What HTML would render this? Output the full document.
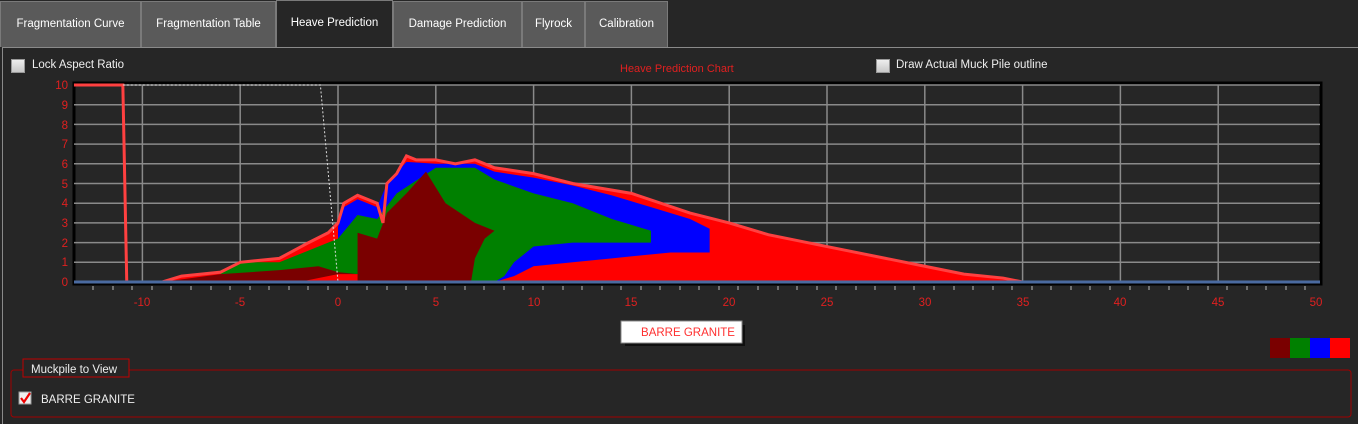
<!DOCTYPE html>
<html><head><style>
body{margin:0;width:1358px;height:424px;background:#262626;font-family:"Liberation Sans",sans-serif;overflow:hidden;position:relative}
.tabs{position:absolute;top:0;left:0;width:1358px;height:47px;background:#262626}
.tab{position:absolute;top:1px;height:46px;background:#5a5a5a;border:1px solid #7a7a7a;border-bottom:none;box-sizing:border-box;color:#fff;font-size:11.5px;line-height:44px;text-align:center}
.tab.a{background:#262626;top:0;height:48px}
.panel{position:absolute;top:47px;left:2px;width:1356px;height:377px;border-left:1px solid #8a8a8a;border-top:1px solid #8a8a8a;box-sizing:border-box}
.cb{position:absolute;width:12px;height:12px;background:linear-gradient(#eee,#c8c8c8);border:1px solid #999}
.lbl{position:absolute;color:#eee;font-size:11.5px}
</style></head><body>
<div class="tabs">
<div class="tab" style="left:0;width:141px">Fragmentation Curve</div>
<div class="tab" style="left:141px;width:135px">Fragmentation Table</div>
<div class="tab a" style="left:276px;width:117px;line-height:44px">Heave Prediction</div>
<div class="tab" style="left:393px;width:129px">Damage Prediction</div>
<div class="tab" style="left:522px;width:63px">Flyrock</div>
<div class="tab" style="left:585px;width:83px">Calibration</div>
</div>
<div class="panel"></div>
<div class="cb" style="left:11px;top:59px"></div><div class="lbl" style="left:32px;top:59px">Lock Aspect Ratio</div>
<div class="cb" style="left:876px;top:59px"></div><div class="lbl" style="left:896px;top:59px">Draw Actual Muck Pile outline</div>
<div class="lbl" style="left:620px;top:63px;color:#e02020;font-size:11px">Heave Prediction Chart</div>
<svg width="1358" height="424" style="position:absolute;left:0;top:0">
<rect x="74" y="83" width="1247" height="201" fill="#262626" stroke="#000" stroke-width="3"/>
<g stroke="#8a8a8a" stroke-width="1.5">
<line x1="74" x2="1320" y1="104.7" y2="104.7"/><line x1="74" x2="1320" y1="124.4" y2="124.4"/><line x1="74" x2="1320" y1="144.1" y2="144.1"/><line x1="74" x2="1320" y1="163.8" y2="163.8"/><line x1="74" x2="1320" y1="183.5" y2="183.5"/><line x1="74" x2="1320" y1="203.2" y2="203.2"/><line x1="74" x2="1320" y1="222.9" y2="222.9"/><line x1="74" x2="1320" y1="242.6" y2="242.6"/><line x1="74" x2="1320" y1="262.3" y2="262.3"/><line x1="74" x2="1320" y1="85" y2="85"/>
<line y1="85" y2="282" x1="142.4" x2="142.4"/><line y1="85" y2="282" x1="240.2" x2="240.2"/><line y1="85" y2="282" x1="338" x2="338"/><line y1="85" y2="282" x1="435.8" x2="435.8"/><line y1="85" y2="282" x1="533.6" x2="533.6"/><line y1="85" y2="282" x1="631.4" x2="631.4"/><line y1="85" y2="282" x1="729.2" x2="729.2"/><line y1="85" y2="282" x1="827" x2="827"/><line y1="85" y2="282" x1="924.8" x2="924.8"/><line y1="85" y2="282" x1="1022.6" x2="1022.6"/><line y1="85" y2="282" x1="1120.4" x2="1120.4"/><line y1="85" y2="282" x1="1218.2" x2="1218.2"/>
</g>
<g transform="translate(338,282) scale(19.56,-19.7)">
<polygon fill="#ff0000" points="-9,0 -8,0.3 -6,0.5 -5,1 -3,1.2 -1.5,2 -0.5,2.5 0,3 0.3,4 1,4.4 2,4 2.3,3 2.5,5 3,5.5 3.5,6.4 4,6.2 5,6.2 6,6 7,6.2 8,5.8 10,5.5 12,5 15,4.5 18,3.5 20,3 22,2.4 25,1.8 28,1.2 30,0.8 32,0.4 34,0.2 35,0"/>
<polygon fill="#0000ff" points="0,2.8 0.3,3.8 1,4.2 2,3.8 2.5,5 3.5,6.1 5,6 7,6 8,5.6 10,5.3 12,4.9 14,4.4 16,3.8 18,3.2 19,2.7 19,1.5 17,1.5 14,1.2 12,1 10,0.8 9,0.3 8,0 0,0"/>
<polygon fill="#008000" points="-6,0 -6,0.6 -5,1 -3,1 -1.5,1.6 0,2.2 1,3.4 2,3.2 3,4.5 5,5.8 7,5.8 8,5.2 10,4.5 12,4 14,3.2 16,2.6 16,2 12,2 10,1.8 9,1 8.5,0.3 8,0"/>
<polygon fill="#7a0000" points="-9,0 -6,0.4 -3,0.6 -1,0.8 0,0.5 1,0.4 1,2.5 2,2.2 2.5,3.5 3.5,4.5 4.5,5.6 5.5,4 7,3 8,2.6 7.5,2.2 7,1.2 6.8,0"/>
<polygon fill="#ff0000" points="-2,0 1,0 1,0.4 0,0.4"/>
<polygon fill="#ff0000" points="9.2,0 10,0.8 14,1 19,1.4 19.2,2.6 22,2.4 22,0"/>
<polyline fill="none" stroke="#ff4040" stroke-width="3" vector-effect="non-scaling-stroke" points="-13.5,10 -11,10 -10.8,0 -9,0 -8,0.3 -6,0.5 -5,1 -3,1.2 -1.5,2 -0.5,2.5 0,3 0.3,4 1,4.4 2,4 2.3,3 2.5,5 3,5.5 3.5,6.4 4,6.2 5,6.2 6,6 7,6.2 8,5.8 10,5.5 12,5 15,4.5 18,3.5 20,3 22,2.4 25,1.8 28,1.2 30,0.8 32,0.4 34,0.2 35,0 50,0"/>
<polyline fill="none" stroke="#ddd" stroke-width="1" stroke-dasharray="2,2" vector-effect="non-scaling-stroke" points="-11,10 -0.9,10 0,0"/>
</g>
<line x1="74" x2="1320" y1="282" y2="282" stroke="#4a6aa0" stroke-width="3"/>
<path stroke="#888" stroke-width="1.5" d="M93 286v4M113 286v4M132 286v4M152 286v4M171 286v4M191 286v4M211 286v4M230 286v4M250 286v4M269 286v4M289 286v4M308 286v4M328 286v4M347 286v4M367 286v4M387 286v4M406 286v4M426 286v4M445 286v4M465 286v4M484 286v4M504 286v4M523 286v4M543 286v4M563 286v4M582 286v4M602 286v4M621 286v4M641 286v4M660 286v4M680 286v4M699 286v4M719 286v4M738 286v4M758 286v4M778 286v4M797 286v4M817 286v4M836 286v4M856 286v4M875 286v4M895 286v4M914 286v4M934 286v4M954 286v4M973 286v4M993 286v4M1012 286v4M1032 286v4M1051 286v4M1071 286v4M1090 286v4M1110 286v4M1130 286v4M1149 286v4M1169 286v4M1188 286v4M1208 286v4M1227 286v4M1247 286v4M1266 286v4M1286 286v4M1305 286v4"/>
<g fill="#e02020" font-size="11.5" font-family="Liberation Sans" text-anchor="end">
<text x="68" y="89">10</text><text x="68" y="109">9</text><text x="68" y="129">8</text><text x="68" y="148">7</text><text x="68" y="168">6</text><text x="68" y="188">5</text><text x="68" y="207">4</text><text x="68" y="227">3</text><text x="68" y="247">2</text><text x="68" y="266">1</text><text x="68" y="286">0</text>
</g>
<g fill="#e02020" font-size="11.5" font-family="Liberation Sans" text-anchor="middle">
<text x="142" y="306">-10</text><text x="240" y="306">-5</text><text x="338" y="306">0</text><text x="436" y="306">5</text><text x="534" y="306">10</text><text x="631" y="306">15</text><text x="729" y="306">20</text><text x="827" y="306">25</text><text x="925" y="306">30</text><text x="1023" y="306">35</text><text x="1120" y="306">40</text><text x="1218" y="306">45</text><text x="1316" y="306">50</text>
</g>
<rect x="622" y="322" width="120" height="21" fill="#000" opacity=".6" transform="translate(3,3)"/>
<rect x="621" y="321" width="121" height="22" fill="#fff" stroke="#888"/>
<text x="688" y="336" fill="#ff3030" font-size="11.5" font-family="Liberation Sans" text-anchor="middle">BARRE GRANITE</text>
<rect x="1270" y="338" width="20" height="20" fill="#7a0000"/><rect x="1290" y="338" width="20" height="20" fill="#008000"/><rect x="1310" y="338" width="20" height="20" fill="#0000ff"/><rect x="1330" y="338" width="20" height="20" fill="#ff0000"/>
<rect x="11" y="370" width="1340" height="47" rx="3" fill="none" stroke="#a00000"/>
<rect x="23" y="359" width="106" height="18" fill="#262626" stroke="#c00000"/>
<text x="31" y="373" fill="#eee" font-size="11.5" font-family="Liberation Sans">Muckpile to View</text>
<rect x="19" y="392" width="12" height="12" fill="#eee" stroke="#999"/>
<path d="M21 398 L24 402 L30 393" stroke="#e00" stroke-width="2.2" fill="none"/>
<text x="41" y="403" fill="#eee" font-size="11.5" font-family="Liberation Sans">BARRE GRANITE</text>
</svg>
</body></html>
